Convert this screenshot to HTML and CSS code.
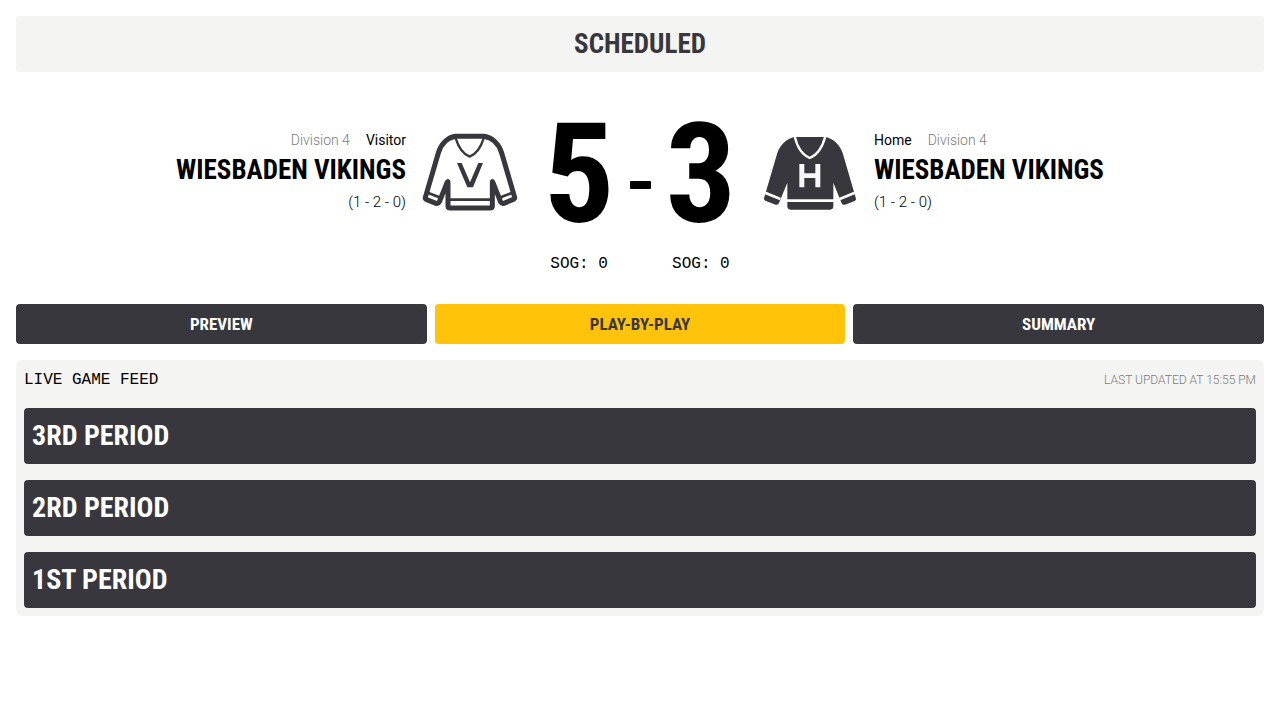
FILE: index.html
```html
<!DOCTYPE html>
<html lang="en">
<head>
<meta charset="utf-8">
<meta name="viewport" content="width=device-width, initial-scale=1">
<title>Wiesbaden Vikings game center</title>
<link rel="stylesheet" href="styles.css">
</head>
<body>
<main class="page">
  <h1 class="status">SCHEDULED</h1>

  <section class="scoreboard" aria-label="Score">
    <div class="team team-visitor">
      <div class="team-info">
        <div class="team-meta"><span class="division">Division 4</span><span class="side">Visitor</span></div>
        <h2 class="team-name">WIESBADEN VIKINGS</h2>
        <div class="record">(1 - 2 - 0)</div>
      </div>
      <svg class="jersey" viewBox="36 36 288 240" aria-hidden="true">
        <g fill="none" stroke="#37373d" stroke-linejoin="round" stroke-linecap="round">
          <path stroke-width="15" d="M136 49H222C247 53 267 72 275 99L314 232Q315 236 310 238L282 250Q275 252 272 246L249 188Q247 181 247 188V258Q247 264 240 264H121Q114 264 114 258V188Q114 181 111 188L88 246Q85 252 78 250L50 239Q45 237 46 232L85 99C93 72 112 53 136 49Z"/>
          <path stroke-width="7" d="M137 55C144 77 156 101 179 110C202 101 214 77 221 55"/>
          <path stroke-width="8" d="M114 239H247M55 219L88 232M305 219L272 232"/>
        </g>
        <path fill="#37373d" d="M141 129H155L180 187L205 129H219L189 202H172Z"/>
      </svg>
    </div>

    <div class="score">
      <div class="score-side"><span class="goals">5</span><span class="shots">SOG: 0</span></div>
      <span class="dash" role="img" aria-label="to"></span>
      <div class="score-side"><span class="goals">3</span><span class="shots">SOG: 0</span></div>
    </div>

    <div class="team team-home">
      <svg class="jersey" viewBox="36 36 288 240" aria-hidden="true">
        <path fill="#37373d" d="M132 51H228C251 57 270 75 278 99L318 236Q319 240 314 243L285 254Q278 256 275 250L250 188V259Q250 269 240 269H122Q112 269 112 259V188L87 249Q84 256 77 254L46 242Q41 240 42 235L82 99C90 75 109 57 132 51Z"/>
        <g fill="none" stroke="#fff">
          <path stroke-width="7" d="M134 49C141 79 157 105 179 114C201 105 218 79 226 49"/>
          <path stroke-width="8" d="M110 242H252M45 218L91 237M315 218L269 237"/>
        </g>
        <path fill="#f7f7f7" d="M148 132H163V160H196V132H211V202H196V174H163V202H148Z"/>
      </svg>
      <div class="team-info">
        <div class="team-meta"><span class="side">Home</span><span class="division">Division 4</span></div>
        <h2 class="team-name">WIESBADEN VIKINGS</h2>
        <div class="record">(1 - 2 - 0)</div>
      </div>
    </div>
  </section>

  <nav class="tabs" aria-label="Game views">
    <button class="tab" type="button">PREVIEW</button>
    <button class="tab tab-active" type="button" aria-current="page">PLAY-BY-PLAY</button>
    <button class="tab" type="button">SUMMARY</button>
  </nav>

  <section class="feed">
    <header class="feed-header">
      <h2 class="feed-title">LIVE GAME FEED</h2>
      <span class="feed-updated">LAST UPDATED AT 15:55 PM</span>
    </header>
    <div class="periods">
      <h3 class="period">3RD PERIOD</h3>
      <h3 class="period">2RD PERIOD</h3>
      <h3 class="period">1ST PERIOD</h3>
    </div>
  </section>
</main>
</body>
</html>
```

FILE: styles.css
```css
:root {
  --dark: #37373d;
  --panel: #f4f4f2;
  --accent: #ffc40a;
  --muted: #7c7c7a;
  --display: "Roboto Condensed", "Liberation Sans Narrow", sans-serif;
  --body: Roboto, "Liberation Sans", sans-serif;
  --mono: "Liberation Mono", monospace;
}

* {
  box-sizing: border-box;
}

body {
  margin: 0;
  background: #fff;
  color: #000;
  font-family: var(--body);
}

h1, h2, h3 {
  margin: 0;
}

.page {
  padding: 16px;
}

.status {
  padding: 8px;
  border-radius: 4px;
  background: var(--panel);
  color: var(--dark);
  font: 700 27px/40px var(--display);
  text-align: center;
}

.scoreboard {
  display: flex;
  align-items: flex-start;
  padding: 20px 0 32px;
}

.team {
  display: flex;
  flex: 1;
  align-items: center;
  gap: 16px;
  padding-top: 36px;
}

.team-visitor {
  justify-content: flex-end;
  text-align: right;
}

.team-visitor .team-meta {
  justify-content: flex-end;
}

.jersey {
  width: 96px;
  height: 80px;
  flex: none;
}

.team-meta {
  display: flex;
  gap: 16px;
  font-size: 14px;
  line-height: 24px;
}

.division {
  color: var(--muted);
  font-weight: 300;
}

.team-name {
  font: 700 27px/36px var(--display);
  white-space: nowrap;
}

.record {
  font-size: 15px;
  font-weight: 300;
  line-height: 28px;
}

.score {
  display: flex;
  justify-content: center;
  gap: 15px;
  width: 244px;
}

.score-side {
  display: flex;
  flex-direction: column;
  align-items: center;
}

.goals {
  font: 700 140px/164px var(--display);
}

.shots {
  font: 16px/16px var(--mono);
}

.dash {
  width: 21px;
  height: 8px;
  margin-top: 89px;
  border-radius: 1px;
  background: #000;
}

.tabs {
  display: grid;
  grid-template-columns: repeat(3, 1fr);
  gap: 8px;
}

.tab {
  height: 40px;
  padding: 0 8px;
  border: 0;
  border-radius: 4px;
  background: var(--dark);
  color: #fff;
  font: 700 17px/24px var(--display);
  cursor: pointer;
}

.tab-active {
  background: var(--accent);
  color: var(--dark);
}

.feed {
  margin-top: 16px;
  padding: 8px;
  border-radius: 6px;
  background: var(--panel);
}

.feed-header {
  display: flex;
  justify-content: space-between;
  padding-bottom: 16px;
}

.feed-title {
  font: 400 16px/24px var(--mono);
}

.feed-updated {
  color: var(--muted);
  font-size: 12px;
  font-weight: 300;
  line-height: 24px;
}

.periods {
  display: grid;
  gap: 16px;
}

.period {
  padding: 8px;
  border-radius: 4px;
  background: var(--dark);
  color: #fff;
  font: 700 28px/40px var(--display);
}
```
